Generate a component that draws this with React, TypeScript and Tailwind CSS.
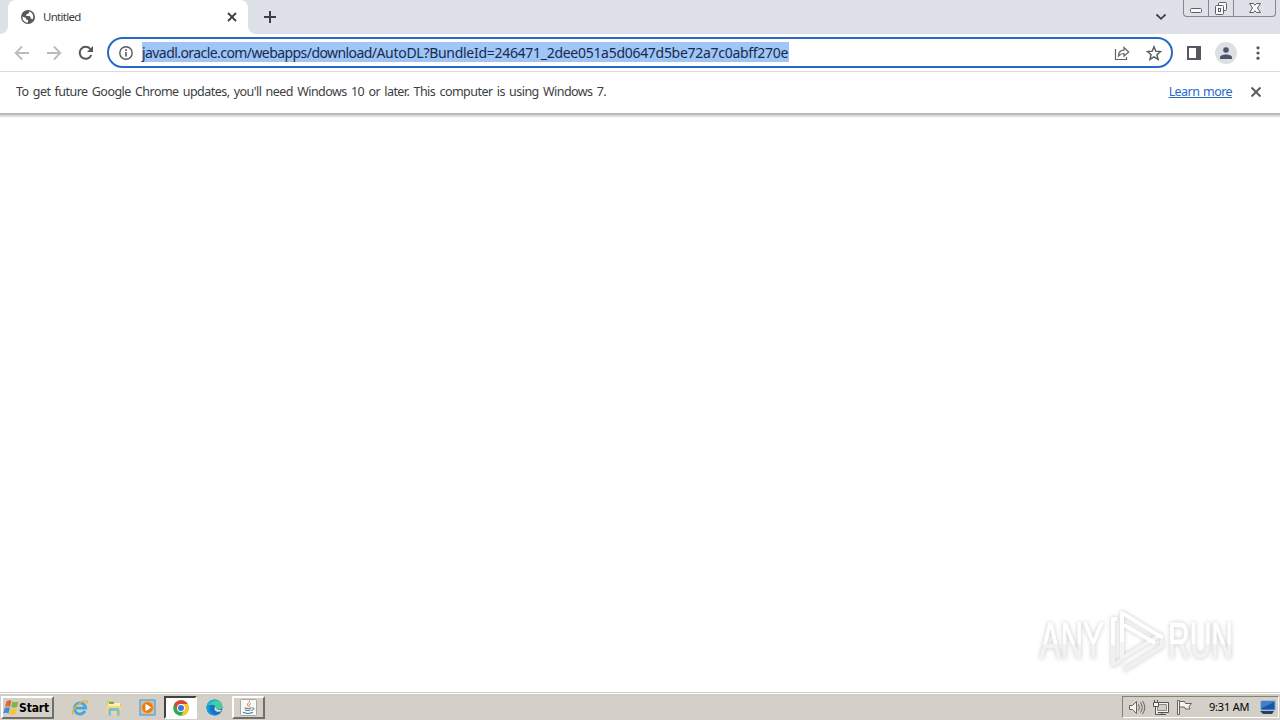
import React from "react";

const ui = "font-['Noto_Sans','DejaVu_Sans',sans-serif]";

function TabStrip() {
  return (
    <header className="flex h-[34px] shrink-0 bg-[#dee1e8]">
      <div className="flex w-2 items-end bg-white"><div className="h-full w-2 rounded-br-lg bg-[#dee1e8]" /></div>
      <div className="flex w-60 items-center rounded-t-lg bg-white pl-[13px] pr-[10px]">
        <svg width="14" height="14" viewBox="0 0 14 14">
          <circle cx="7" cy="7" r="7" fill="#55595e" />
          <path d="M1.5 6.5 5 8v1.5l2 .5v2.6C3.6 12.6 1 10 1.5 6.5ZM8 1.5v1.3L6.4 4.3H5.2v1.6h3.2l1.2 1.2v1.6h1.2l.8.7c1.6-3 .4-6.9-3.6-7.9Z" fill="#fff" />
        </svg>
        <span className="ml-2 flex-1 text-[11.5px] leading-4 tracking-[-0.7px] text-[#3c4043]">Untitled</span>
        <svg width="12" height="12" viewBox="0 0 12 12" stroke="#3c4043" strokeWidth="1.8"><path d="m2 2 8 8M10 2l-8 8" /></svg>
      </div>
      <div className="flex w-2 bg-white"><div className="h-full w-2 rounded-bl-lg bg-[#dee1e8]" /></div>
      <svg className="ml-[7px] mt-[10px]" width="14" height="14" viewBox="0 0 14 14" stroke="#3c4043" strokeWidth="2"><path d="M7 1v12M1 7h12" /></svg>
      <div className="flex-1" />
      <svg className="mr-4 mt-[12px]" width="12" height="9" viewBox="0 0 12 9" fill="none" stroke="#3c4043" strokeWidth="1.8"><path d="m1.5 2.5 4.5 4.3 4.5-4.3" /></svg>
      <div className="mr-[4px] flex h-[17px] w-[93px] rounded-b-[4px] border border-t-0 border-[#85888d]">
        <div className="flex w-[25px] justify-center border-r border-[#85888d]">
          <svg width="14" height="16" viewBox="0 0 14 16"><rect x="1.5" y="8.5" width="11" height="4" rx="1" fill="#f8f9fb" stroke="#5c6066" /></svg>
        </div>
        <div className="flex w-[25px] justify-center border-r border-[#85888d]">
          <svg width="14" height="16" viewBox="0 0 14 16" fill="#f8f9fb" stroke="#5c6066"><rect x="4.5" y="2.5" width="8" height="8" rx="1" /><rect x="1.5" y="5.5" width="8" height="9" rx="1" /><rect x="4.5" y="8.5" width="2" height="3" /></svg>
        </div>
        <div className="flex flex-1 justify-center">
          <svg width="14" height="16" viewBox="0 0 14 16" fill="#f8f9fb" stroke="#5c6066"><path d="M1.500 3.500h4L7 5.300l1.500-1.800h4L9.500 8l3 4.500h-4L7 10.700 5.500 12.500h-4l3-4.500Z" /></svg>
        </div>
      </div>
    </header>
  );
}

function Toolbar() {
  return (
    <div className="flex h-[38px] shrink-0 items-center border-b border-[#dadce0] bg-white pl-[14px] pr-[14px]">
      <svg width="16" height="16" viewBox="0 0 16 16" fill="none" stroke="#b9bbbe" strokeWidth="1.800"><path d="M15 8H2M8 1.500 1.700 8 8 14.500" /></svg>
      <svg className="ml-4" width="16" height="16" viewBox="0 0 16 16" fill="none" stroke="#b9bbbe" strokeWidth="1.800"><path d="M1 8h13M8 1.500 14.300 8 8 14.500" /></svg>
      <svg className="ml-4" width="16" height="16" viewBox="0 0 16 16" fill="none" stroke="#55595e" strokeWidth="2"><path d="M13.300 10A6 6 0 1 1 12.300 3.900L14 5.600" /><path d="M15 1v6H9Z" fill="#55595e" stroke="none" /></svg>
      <div className="ml-[13px] flex h-[31px] w-[1066px] items-center rounded-full border-2 border-[#2869c7] bg-white pl-[10px] pr-[9px]">
        <svg width="14" height="14" viewBox="0 0 14 14"><circle cx="7" cy="7" r="6.200" fill="none" stroke="#55595e" strokeWidth="1.400" /><path d="M7 6v4.500M7 3.300v1.600" stroke="#55595e" strokeWidth="1.600" /></svg>
        <span className="mb-px ml-[9px] h-5 w-[647px] whitespace-nowrap bg-[#a0c5f7] text-[14px] leading-[21px] tracking-[-0.29px] text-[#172b4d]"><span className="tracking-[-0.57px]">javadl.oracle.com/webapps/download/</span>AutoDL?BundleId=246471_2dee051a5d0647d5be72a7c0abff270e</span>
        <div className="flex-1" />
        <svg width="16" height="16" viewBox="0 0 16 16" fill="none" stroke="#606469" strokeWidth="1.200"><path d="M1.500 4v10.500h11V12" /><path d="M4.500 11c.2-3.800 2.200-5.800 5.500-5.800V2.500L14.700 7 10 11.200V8.500C7.500 8.500 6 9.200 4.500 11Z" /></svg>
        <svg className="ml-4" width="16" height="16" viewBox="0 0 16 16" fill="none" stroke="#55595e" strokeWidth="1.400"><path d="m8 1.700 1.800 4.500 4.800.4-3.700 3.100 1.200 4.700L8 11.900l-4.100 2.500 1.200-4.700-3.700-3.100 4.800-.4Z" /></svg>
      </div>
      <svg className="ml-[14px]" width="14" height="14" viewBox="0 0 14 14"><path d="M1 1h12v12H1Z" fill="none" stroke="#55595e" strokeWidth="2" /><path d="M9 0h5v14H9Z" fill="#55595e" /></svg>
      <div className="ml-[14px] flex h-[22px] w-[22px] items-center justify-center rounded-full bg-[#dcdfe4]">
        <svg width="12" height="12" viewBox="0 0 12 12" fill="#4c566b"><circle cx="6" cy="3" r="2.800" /><path d="M0 12v-1.500C0 6.500 12 6.500 12 10.500V12Z" /></svg>
      </div>
      <div className="flex-1" />
      <svg width="16" height="16" viewBox="0 0 16 16" fill="#55595e"><circle cx="8" cy="2.800" r="1.600" /><circle cx="8" cy="8" r="1.600" /><circle cx="8" cy="13.200" r="1.600" /></svg>
    </div>
  );
}

function InfoBar() {
  return (
    <div className="flex h-[41px] shrink-0 items-center bg-white px-4 pb-px text-[12.5px] leading-5 text-[#3c4043]">
      <span className="whitespace-nowrap tracking-[-0.54px] [word-spacing:1.5px]">To get future Google Chrome updates, you'll need Windows 10 or later. This computer is using Windows 7.</span>
      <div className="flex-1" />
      <a className="whitespace-nowrap tracking-[-0.56px] text-[#2869c7] underline [word-spacing:1px]">Learn more</a>
      <svg className="ml-[18px] mr-[2px]" width="12" height="12" viewBox="0 0 12 12" stroke="#55595e" strokeWidth="1.800"><path d="m1.500 1.500 9 9M10.500 1.500l-9 9" /></svg>
    </div>
  );
}

function Watermark() {
  return (
    <svg className="mb-[17px] mr-[40px] drop-shadow-[0_0_2px_rgba(0,0,0,0.22)]" width="206" height="72" viewBox="0 0 206 72">
      <defs>
        <linearGradient id="fade" gradientUnits="userSpaceOnUse" x1="0" y1="18" x2="0" y2="56">
          <stop offset="0" stopColor="#fff" />
          <stop offset="0.600" stopColor="#fff" />
          <stop offset="0.610" stopColor="#f2f2f2" />
          <stop offset="1" stopColor="#f2f2f2" />
        </linearGradient>
      </defs>
      <g fontFamily="Liberation Sans, sans-serif" fontSize="50" fill="url(#fade)" stroke="url(#fade)" strokeWidth="1.200">
        <text transform="translate(6 0) scale(.62 1)" x="0" y="55">ANY</text>
        <text transform="translate(134 0) scale(.6 1)" x="0" y="55">RUN</text>
      </g>
      <g fill="none" strokeLinejoin="round" strokeWidth="4">
        <path d="M79 41v21l10-6" stroke="#f0f0f0" />
        <path d="M88 38v17l40-24" stroke="#f4f4f4" />
        <path d="m90 67 38-24v-6" stroke="#f0f0f0" />
        <path d="M79 42V16h4" stroke="#fff" />
        <path d="M88 39V10l41 25" stroke="#fff" />
        <path d="m90 22 31 18" stroke="#fff" />
      </g>
    </svg>
  );
}

function WindowsFlag() {
  return <svg className="shrink-0" width="16" height="17" viewBox="0 0 16 17"><path d="M3.500 2.500Q6 .5 8.500 2L7 8Q4.500 6.500 2 8Z" fill="#e96332" /><path d="M9.500 2.500q3 1.500 6 0L14 8q-3 1.500-6 0Z" fill="#79b846" /><path d="M1.700 9Q4.500 7.500 7 9l-1.500 5.500Q3 13 .2 14.500Z" fill="#3b91d5" /><path d="M7.800 9.500q3 1.500 6 0l-1.500 5.500q-3 1.500-6 0Z" fill="#f6c42d" /></svg>;
}

function IEIcon() {
  return <svg width="18" height="18" viewBox="0 0 18 18" fill="none"><path d="M14 12A5.600 5.600 0 1 1 14.600 9.200H5" stroke="#42a8df" strokeWidth="2.800" /><path d="M2.500 15.700C-.5 14.500 3 7.500 10 3.300c4-2.300 7-2 6 1.200" stroke="#e5b535" strokeWidth="1.500" /></svg>;
}

function FolderIcon() {
  return <svg width="18" height="18" viewBox="0 0 18 18"><path d="M2 2h6l1 2h7v11H2Z" fill="#dfc36a" /><path d="M3 4h12v4H3Z" fill="#fff2a9" /><path d="M4 3h5v2H4Z" fill="#65b45c" /><path d="M1.500 7h15v8h-15Z" fill="#f0d888" /><path d="M3.500 16.500V11q0-2 2-2h7q2 0 2 2v5.500h-2.500V12H6v4.500Z" fill="#78bfdc" /></svg>;
}

function MediaIcon() {
  return <svg width="17" height="17" viewBox="0 0 17 17"><rect x="1" y="1" width="15" height="15" fill="#a9cae4" stroke="#4d8fbd" /><circle cx="8.500" cy="8.500" r="6" fill="#ee7b13" stroke="#f7b85b" /><path d="m6.500 4.700 5.800 3.800-5.800 3.800Z" fill="#fff" /></svg>;
}

function ChromeIcon() {
  return <svg width="16" height="16" viewBox="0 0 16 16"><circle cx="8" cy="8" r="7.800" fill="#32a852" /><path d="M1.250 4.100A7.800 7.800 0 0 1 14.750 4.100H8L4.600 10Z" fill="#e44234" /><path d="M14.750 4.100A7.800 7.800 0 0 1 8 15.800L11.400 10 8 4.100Z" fill="#fbc923" /><circle cx="8" cy="8" r="4" fill="#fff" /><circle cx="8" cy="8" r="3" fill="#3978df" /></svg>;
}

function EdgeIcon() {
  return <svg width="17" height="17" viewBox="0 0 17 17"><circle cx="8.500" cy="8.500" r="8" fill="#1674c5" /><path d="M.6 8C1-1.800 16.700-1.800 16.500 7.500c0 3.500-5 4-6.500 2.200C11 5.700 3.800 4 .6 8Z" fill="#48cba0" /><path d="M.6 8C1 2 8-1 13 2 8 1 4 4 .6 8Z" fill="#22aee0" /><path d="M9.800 7.700c-2.300 1.300-1.100 4.800 2 5.100 1.400.1 2.800-.2 3.700-.8 1-1.900-5.500.5-5.500-3.200Z" fill="#dbe4e7" /><path d="M4 8c-1 4 2 7.500 6 8-5 1.300-10-3-9.400-8C1.500 6 4 6 4 8Z" fill="#1199da" /></svg>;
}

function JavaIcon() {
  return <svg width="17" height="17" viewBox="0 0 17 17" fill="none"><rect x=".5" y=".5" width="16" height="16" rx="1" fill="#f8f8f5" stroke="#a5a9ad" /><path d="M9.500 1.500c1 2-4 3-1.200 6M11 4.500c-2 1-2.500 2-1.500 3.200" stroke="#d97842" /><path d="M4.500 9q4 1 7 0M5 11q3 1 5.500 0M3 13.500q5 2 10 0M12 9c3-.5 2 2-.5 2.500" stroke="#476c91" /></svg>;
}

function SystemTray() {
  return (
    <div className="mt-[3px] flex h-[22px] w-[157px] items-center border border-[#fff] border-l-[#858178] border-t-[#858178] pl-[5px]">
      <svg width="18" height="17" viewBox="0 0 18 17" fill="#f5f5f3" stroke="#64635f"><path d="M1.500 6.500h3l4-4v12l-4-4h-3Z" /><path d="M10.500 5.500q2 3 0 6M12.500 3.500q3.500 5 0 10M14.500 2q4.500 6.500 0 13" fill="none" /></svg>
      <svg className="ml-[6px]" width="17" height="17" viewBox="0 0 17 17" fill="#f5f5f3" stroke="#555450"><path d="M3.500 3.500h13v10h-13Z" /><path d="M5.500 5.500h9v6h-9Z" fill="#d0cec8" stroke="#8b8983" /><path d="M6 15.500h8M10 13.500v2" /><path d="M2.500 1v3M5.500 1v3M1.500 3.500h5v4h-5ZM3.500 8v7.500h3" /></svg>
      <svg className="ml-[7px]" width="17" height="17" viewBox="0 0 17 17" fill="#f5f5f3" stroke="#64635f"><path d="M1.500 1.500h2v14h-2Z" /><path d="M3.500 2.500h5l1 2h6l-2.500 3 1 2.500H9.500l-1-2h-5Z" /></svg>
      <span className="ml-[16px] whitespace-nowrap text-[11px] leading-4 tracking-[-0.2px] text-black">9:31 AM</span>
      <div className="flex-1" />
      <svg className="mr-[2px]" width="17" height="15" viewBox="0 0 17 15"><path d="M2 1h14v9H2Z" fill="#1755a9" stroke="#76a9df" /><path d="M3 2h12L3 8Z" fill="#3b83cf" /><path d="M1 11h14l-2 3H4Z" fill="#29405a" /></svg>
    </div>
  );
}

function Taskbar() {
  return (
    <footer className="flex h-[28px] shrink-0 border-t border-[#d4d0c8] bg-[#d4d0c8] pr-px shadow-[inset_0_1px_0_#fff]">
      <button className="ml-[1px] mt-[3px] flex h-[23px] w-[53px] items-center border-2 border-[#716f69] border-l-white border-t-white bg-[#d4d0c8]">
        <WindowsFlag />
        <span className="whitespace-nowrap font-['DejaVu_Sans_Condensed','DejaVu_Sans',sans-serif] text-[12px] font-bold leading-4 tracking-[-0.150px] text-black">Start</span>
      </button>
      <nav className="ml-[17px] mt-[3px] flex h-[23px] items-center">
        <div className="flex w-[34px]"><IEIcon /></div>
        <div className="flex w-[34px]"><FolderIcon /></div>
        <div className="flex w-[25px]"><MediaIcon /></div>
        <button className="flex h-[23px] w-[33px] items-center justify-center border-2 border-white border-l-[#44423d] border-t-[#44423d] bg-white"><ChromeIcon /></button>
        <div className="flex w-[35px] justify-center"><EdgeIcon /></div>
        <button className="flex h-[23px] w-[33px] items-center justify-center border-2 border-[#716f69] border-l-white border-t-white bg-[#d4d0c8]"><JavaIcon /></button>
      </nav>
      <div className="flex-1" />
      <SystemTray />
    </footer>
  );
}

export default function App() {
  return (
    <div className={`flex h-[720px] w-[1280px] flex-col overflow-hidden bg-white ${ui}`}>
      <TabStrip />
      <Toolbar />
      <InfoBar />
      <main className="flex flex-1 flex-col bg-white">
        <div className="h-[5px] bg-linear-to-b from-[#aaaaaa] to-white" />
        <div className="flex flex-1 items-end justify-end"><Watermark /></div>
      </main>
      <Taskbar />
    </div>
  );
}
